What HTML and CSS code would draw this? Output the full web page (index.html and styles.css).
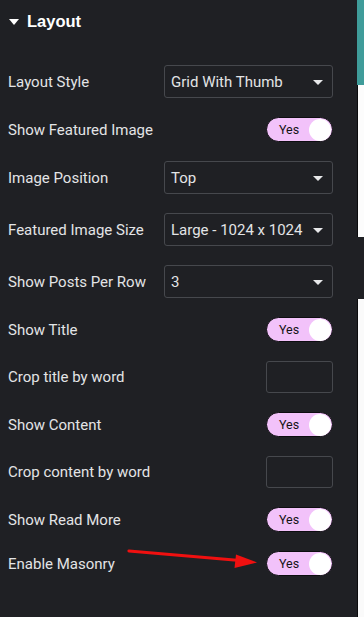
FILE: index.html
```html
<!DOCTYPE html>
<html>
<head>
<meta charset="utf-8">
<link rel="stylesheet" href="styles.css">
</head>
<body>
<div class="page">
  <div class="panel">
    <div class="section-head">
      <span class="caret-down"></span>
      <span class="section-title">Layout</span>
    </div>
    <div class="controls">
      <div class="row row-select">
        <span class="label">Layout Style</span>
        <div class="select"><span>Grid With Thumb</span><span class="sel-caret"></span></div>
      </div>
      <div class="row row-toggle">
        <span class="label">Show Featured Image</span>
        <div class="toggle"><span class="toggle-text">Yes</span><span class="knob"></span></div>
      </div>
      <div class="row row-select">
        <span class="label">Image Position</span>
        <div class="select"><span>Top</span><span class="sel-caret"></span></div>
      </div>
      <div class="row row-select">
        <span class="label">Featured Image Size</span>
        <div class="select"><span>Large - 1024 x 1024</span><span class="sel-caret"></span></div>
      </div>
      <div class="row row-select">
        <span class="label">Show Posts Per Row</span>
        <div class="select"><span>3</span><span class="sel-caret"></span></div>
      </div>
      <div class="row row-toggle">
        <span class="label">Show Title</span>
        <div class="toggle"><span class="toggle-text">Yes</span><span class="knob"></span></div>
      </div>
      <div class="row row-input">
        <span class="label">Crop title by word</span>
        <div class="num-input"></div>
      </div>
      <div class="row row-toggle">
        <span class="label">Show Content</span>
        <div class="toggle"><span class="toggle-text">Yes</span><span class="knob"></span></div>
      </div>
      <div class="row row-input">
        <span class="label">Crop content by word</span>
        <div class="num-input"></div>
      </div>
      <div class="row row-toggle">
        <span class="label">Show Read More</span>
        <div class="toggle"><span class="toggle-text">Yes</span><span class="knob"></span></div>
      </div>
      <div class="row row-toggle">
        <span class="label">Enable Masonry</span>
        <div class="toggle"><span class="toggle-text">Yes</span><span class="knob"></span></div>
      </div>
    </div>
    <svg class="arrow" width="364" height="617" viewBox="0 0 364 617">
      <line x1="129" y1="551" x2="240" y2="560.5" stroke="#f01010" stroke-width="3.2" stroke-linecap="round"/>
      <polygon points="257,562.5 236,554.5 234.5,568" fill="#f01010"/>
    </svg>
  </div>
  <div class="strip">
    <div class="strip-teal"></div>
    <div class="strip-white"></div>
    <div class="strip-dark"></div>
    <div class="strip-light"></div>
  </div>
</div>
</body>
</html>
```
FILE: styles.css
```css
html, body {
  margin: 0;
  padding: 0;
  background: #1f2024;
}
.page {
  display: flex;
  width: 364px;
  height: 617px;
  overflow: hidden;
}
.panel {
  width: 357px;
  flex: none;
  background: #1f2024;
  box-sizing: border-box;
  padding: 0 24px 0 8px;
}
.section-head {
  height: 42px;
  display: flex;
  align-items: center;
  gap: 8px;
  padding-left: 1px;
}
.caret-down {
  width: 0;
  height: 0;
  border-left: 5px solid transparent;
  border-right: 5px solid transparent;
  border-top: 6px solid #ffffff;
  margin-top: 1px;
}
.section-title {
  font-family: "Liberation Sans", Arial, sans-serif;
  font-weight: bold;
  font-size: 16.5px;
  color: #ffffff;
}
.controls {
  margin-top: 23px;
  display: flex;
  flex-direction: column;
  gap: 19px;
}
.row {
  display: flex;
  align-items: center;
  justify-content: space-between;
}
.row-select { height: 33px; }
.row-toggle { height: 25px; }
.row-input { height: 32px; }
.label {
  font-family: Roboto, "Noto Sans", sans-serif;
  font-size: 15px;
  color: #e3e4e6;
}
.select {
  width: 169px;
  height: 33px;
  box-sizing: border-box;
  border: 1px solid #46484d;
  border-radius: 3px;
  display: flex;
  align-items: center;
  justify-content: space-between;
  padding: 0 9px 0 6px;
  font-family: Roboto, "Noto Sans", sans-serif;
  font-size: 15px;
  color: #e3e4e6;
}
.sel-caret {
  width: 0;
  height: 0;
  border-left: 5px solid transparent;
  border-right: 5px solid transparent;
  border-top: 5px solid #e8e8ea;
  margin-top: 1px;
}
.toggle {
  width: 67px;
  height: 25px;
  box-sizing: border-box;
  border: 1px solid #0d0d10;
  border-radius: 13px;
  background: #f2c2fa;
  display: flex;
  align-items: center;
  justify-content: space-between;
  padding: 0 1px 0 12px;
}
.toggle-text {
  font-family: Roboto, "Noto Sans", sans-serif;
  font-size: 12.5px;
  color: #151515;
}
.knob {
  width: 22px;
  height: 22px;
  border-radius: 50%;
  background: #ffffff;
}
.num-input {
  width: 67px;
  height: 32px;
  box-sizing: border-box;
  border: 1px solid #46484d;
  border-radius: 3px;
}
.arrow {
  position: absolute;
  left: 0;
  top: 0;
  pointer-events: none;
}
.strip {
  flex: 1;
  display: flex;
  flex-direction: column;
}
.strip-teal {
  height: 85px;
  background: #3f9c9a;
}
.strip-white {
  height: 152px;
  background: #fcfcfc;
  border-left: 1px solid #0b0b0d;
}
.strip-dark {
  height: 62px;
  background: #1f2024;
}
.strip-light {
  flex: 1;
  background: #fafafa;
  border-left: 1px solid #0b0b0d;
}
```
